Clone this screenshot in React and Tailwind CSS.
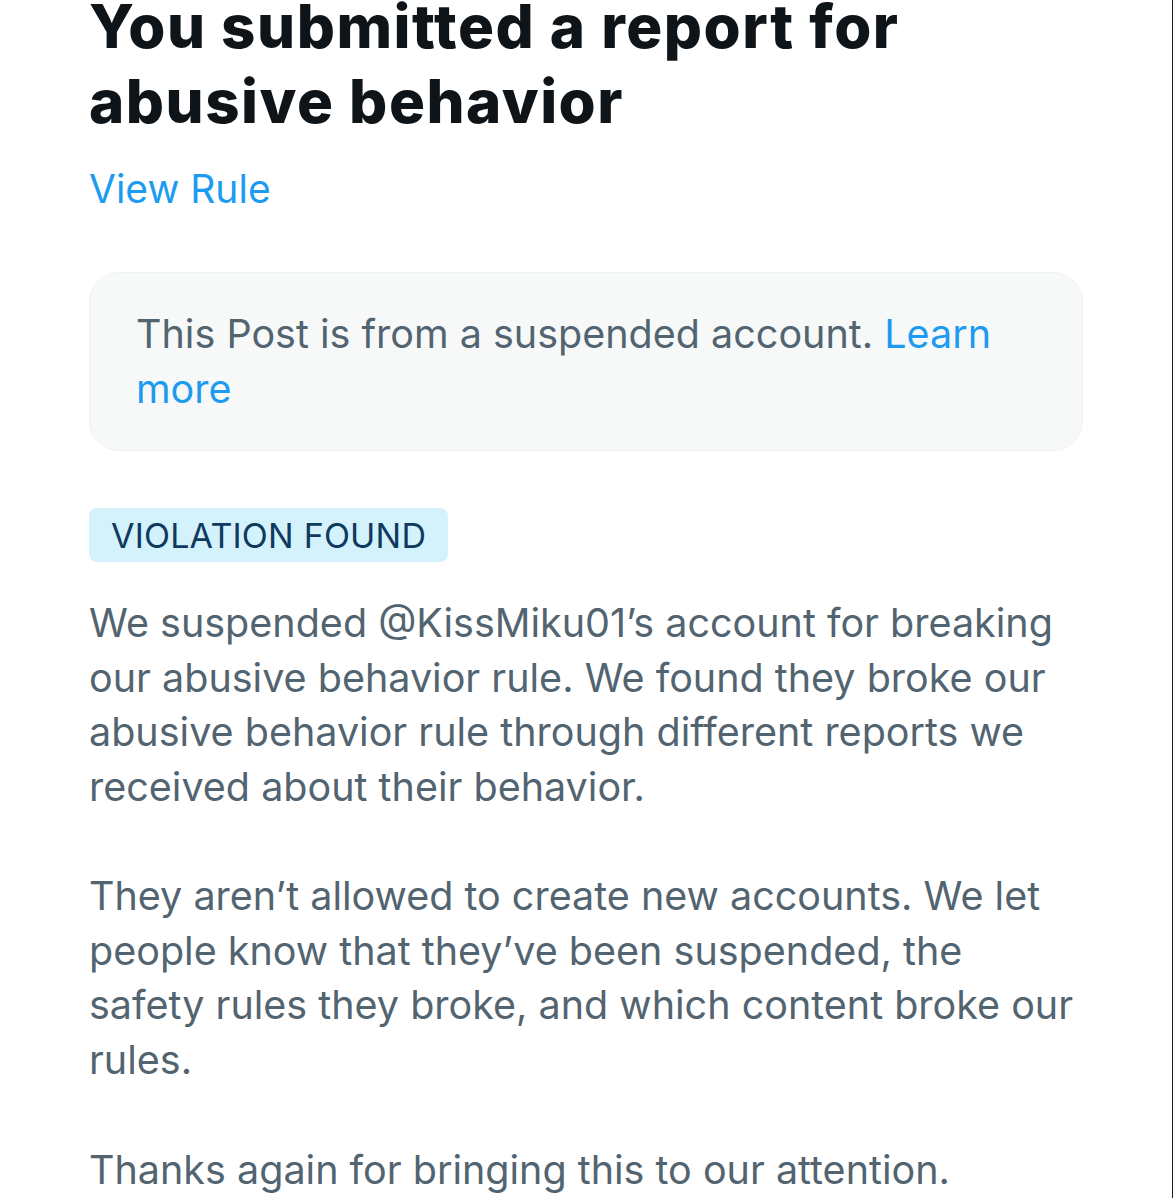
import React from 'react';

const body = "text-[#536471] text-[39.5px] leading-[54.5px]";

const App = () => {
  return (
    <div className="min-h-[1200px] w-full bg-white border-r border-[#1a1a1a] font-['Inter',_'Liberation_Sans',_sans-serif]">
      <div className="pl-[89px] pr-[60px]">
        <h1 className="text-[#0f1419] font-extrabold text-[60px] leading-[75px] -mt-[11px] tracking-[1.5px]">
          You submitted a report for
          <br />
          abusive behavior
        </h1>

        <a className="block mt-[27px] text-[#1d9bf0] text-[39px] leading-[46px]">View Rule</a>

        <div className="mt-[60px] w-[994px] rounded-[30px] bg-[#f7f9f9] border border-[#eff3f4] px-[46px] pt-[34px] pb-[34px]">
          <p className={body}>
            This Post is from a suspended account. <span className="text-[#1d9bf0]">Learn</span>
            <br />
            <span className="text-[#1d9bf0]">more</span>
          </p>
        </div>

        <div className="mt-[57px] inline-flex h-[54px] items-center rounded-[8px] bg-[#d4f2fb] px-[22px]">
          <span className="text-[#0f3a60] text-[34px] tracking-[0.2px]">VIOLATION FOUND</span>
        </div>

        <p className={`${body} mt-[34px]`}>
          We suspended @KissMiku01’s account for breaking
          <br />
          our abusive behavior rule. We found they broke our
          <br />
          abusive behavior rule through different reports we
          <br />
          received about their behavior.
        </p>

        <p className={`${body} mt-[55px]`}>
          They aren’t allowed to create new accounts. We let
          <br />
          people know that they’ve been suspended, the
          <br />
          safety rules they broke, and which content broke our
          <br />
          rules.
        </p>

        <p className={`${body} mt-[56px]`}>Thanks again for bringing this to our attention.</p>
      </div>
    </div>
  );
};

export default App;
